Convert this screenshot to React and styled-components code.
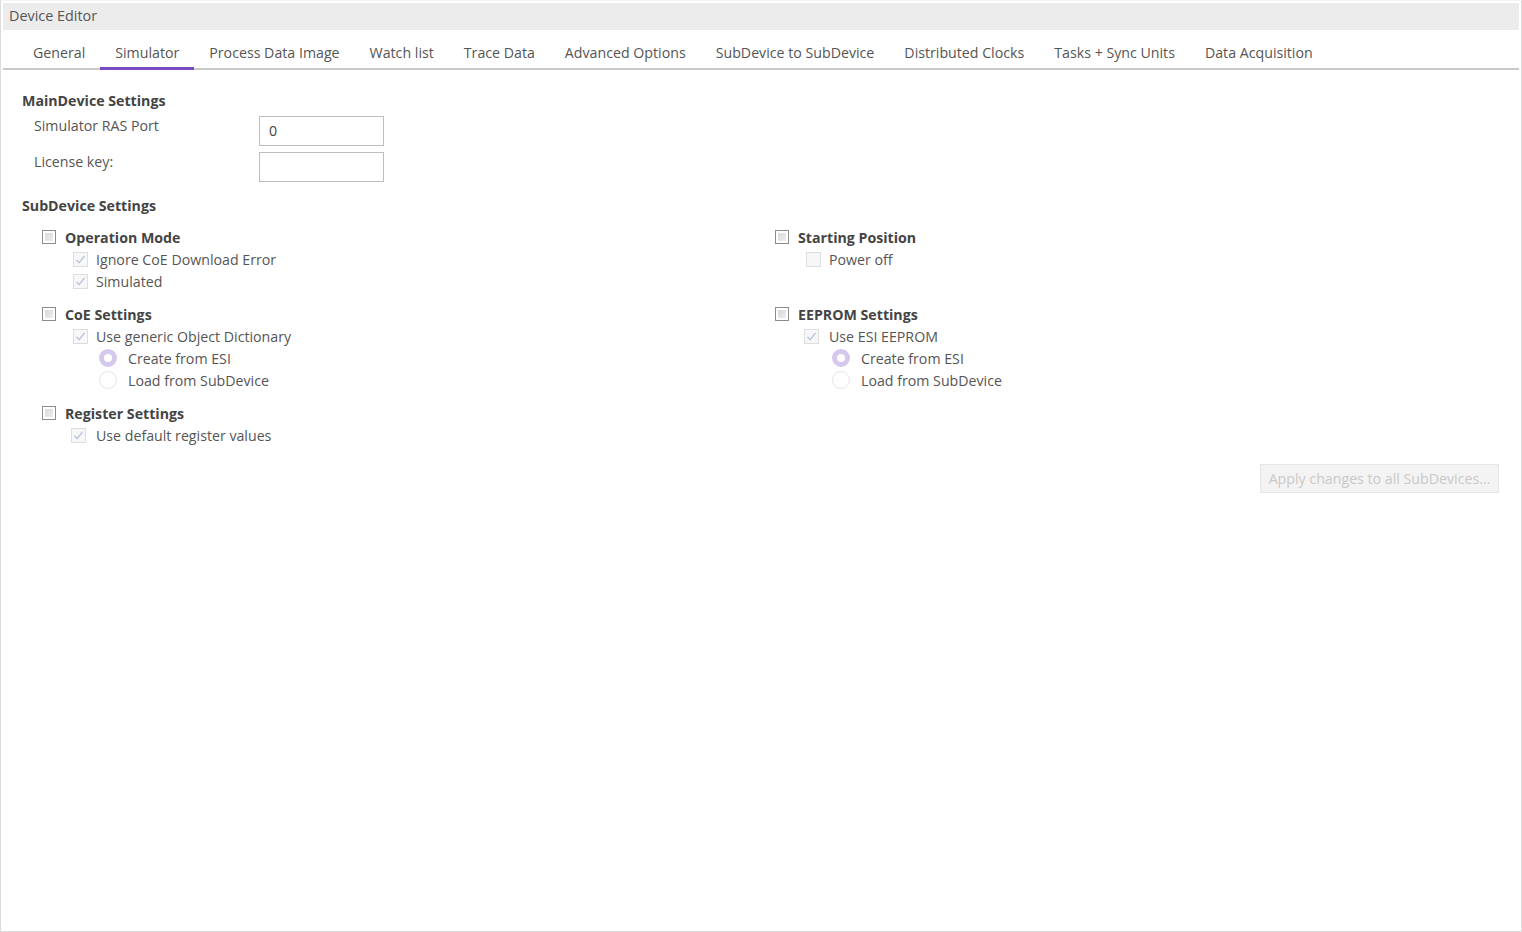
import React from "react";
import styled, { createGlobalStyle } from "styled-components";

const GlobalStyle = createGlobalStyle`
  html, body {
    margin: 0;
    padding: 0;
    background: #ffffff;
  }
  body {
    font-family: "Open Sans", "Noto Sans", "Liberation Sans", sans-serif;
    font-size: 14.2px;
    color: #555555;
  }
`;

const Frame = styled.div`
  width: 1522px;
  height: 932px;
  box-sizing: border-box;
  border: 1px solid #dcdcdc;
  border-top-color: #f4f4f4;
  padding: 2px 2px 0 2px;
  display: flex;
  flex-direction: column;
  overflow: hidden;
`;

const TitleBar = styled.div`
  height: 27px;
  background: #ececec;
  display: flex;
  align-items: center;
  padding-left: 6px;
  padding-bottom: 3px;
  box-sizing: border-box;
  font-size: 14.4px;
  color: #555555;
`;

const TabRow = styled.div`
  margin-top: 7px;
  display: flex;
  padding-left: 15px;
  border-bottom: 2px solid #c9c9c9;
`;

const Tab = styled.div`
  line-height: 31px;
  padding: 0 15px;
  color: #555555;
  white-space: nowrap;
  box-sizing: border-box;
  margin-bottom: ${({ $active }) => ($active ? "-2px" : "0")};
  border-bottom: ${({ $active }) => ($active ? "3px solid #7a4cc2" : "none")};
  height: ${({ $active }) => ($active ? "33px" : "31px")};
`;

const Content = styled.div`
  padding: 20px 20px 0 19px;
  display: flex;
  flex-direction: column;
`;

const SectionTitle = styled.div`
  font-weight: 700;
  color: #444444;
  line-height: 22px;
  margin-top: ${({ $top }) => $top || 0}px;
`;

const FormGrid = styled.div`
  margin-top: 4px;
  display: grid;
  grid-template-columns: 225px 125px;
  row-gap: 6px;
  padding-left: 12px;
`;

const FormLabel = styled.div`
  line-height: 20px;
  color: #555555;
`;

const TextBox = styled.div`
  height: 30px;
  box-sizing: border-box;
  border: 1px solid #bdbdbd;
  padding: 0 9px;
  line-height: 28px;
  color: #444444;
  background: #ffffff;
`;

const Groups = styled.div`
  margin-top: 9px;
  padding-left: 20px;
  display: grid;
  grid-template-columns: 733px 1fr;
  row-gap: 11px;
  align-items: start;
`;

const Group = styled.div`
  display: flex;
  flex-direction: column;
`;

const Line = styled.div`
  display: flex;
  align-items: center;
  height: 22px;
  padding-left: ${({ $indent }) => $indent || 0}px;
  gap: ${({ $gap }) => $gap || 8}px;
  white-space: nowrap;
`;

const HeaderText = styled.span`
  font-weight: 700;
  color: #444444;
`;

const ItemText = styled.span`
  color: #555555;
`;

const BigBox = styled.span`
  width: 14px;
  height: 14px;
  box-sizing: border-box;
  border: 1px solid #8c8c8c;
  background: linear-gradient(135deg, #d4d4d4, #f2f2f2);
  box-shadow: inset 0 0 0 2px #ffffff;
  flex: none;
`;

const SmallBox = styled.span`
  width: 15px;
  height: 15px;
  box-sizing: border-box;
  border: 1px solid #dedede;
  background: #f7f7f7;
  display: flex;
  align-items: center;
  justify-content: center;
  flex: none;
`;

const Radio = styled.span`
  width: 18px;
  height: 18px;
  box-sizing: border-box;
  border-radius: 50%;
  flex: none;
  border: ${({ $on }) => ($on ? "5px solid #d5c8ec" : "1px solid #e6e6e6")};
  background: #ffffff;
`;

const ButtonRow = styled.div`
  margin-top: 18px;
  display: flex;
  justify-content: flex-end;
`;

const ApplyButton = styled.div`
  width: 239px;
  height: 29px;
  box-sizing: border-box;
  border: 1px solid #e6e6e6;
  background: #f3f3f3;
  color: #c9c9c9;
  display: flex;
  align-items: center;
  justify-content: center;
  white-space: nowrap;
`;

const Check = ({ checked }) => (
  <SmallBox>
    {checked && (
      <svg width="11" height="11" viewBox="0 0 11 11">
        <path d="M1.5 6 L4.2 8.6 L9.5 1.8" fill="none" stroke="#b3c0dc" strokeWidth="1.3" />
      </svg>
    )}
  </SmallBox>
);

const Header = ({ children }) => (
  <Line $gap={9}>
    <BigBox />
    <HeaderText>{children}</HeaderText>
  </Line>
);

const Item = ({ children, checked = true, indent = 31, gap = 8 }) => (
  <Line $indent={indent} $gap={gap}>
    <Check checked={checked} />
    <ItemText>{children}</ItemText>
  </Line>
);

const RadioItem = ({ children, on, indent = 57 }) => (
  <Line $indent={indent} $gap={11}>
    <Radio $on={on} />
    <ItemText>{children}</ItemText>
  </Line>
);

const tabs = [
  "General",
  "Simulator",
  "Process Data Image",
  "Watch list",
  "Trace Data",
  "Advanced Options",
  "SubDevice to SubDevice",
  "Distributed Clocks",
  "Tasks + Sync Units",
  "Data Acquisition",
];

const App = () => {
  return (
    <>
      <GlobalStyle />
      <Frame>
        <TitleBar>Device Editor</TitleBar>
        <TabRow>
          {tabs.map((t) => (
            <Tab key={t} $active={t === "Simulator"}>
              {t}
            </Tab>
          ))}
        </TabRow>
        <Content>
          <SectionTitle>MainDevice Settings</SectionTitle>
          <FormGrid>
            <FormLabel>Simulator RAS Port</FormLabel>
            <TextBox>0</TextBox>
            <FormLabel>License key:</FormLabel>
            <TextBox />
          </FormGrid>
          <SectionTitle $top={13}>SubDevice Settings</SectionTitle>
          <Groups>
            <Group>
              <Header>Operation Mode</Header>
              <Item>Ignore CoE Download Error</Item>
              <Item>Simulated</Item>
            </Group>
            <Group>
              <Header>Starting Position</Header>
              <Item checked={false}>Power off</Item>
            </Group>
            <Group>
              <Header>CoE Settings</Header>
              <Item>Use generic Object Dictionary</Item>
              <RadioItem on>Create from ESI</RadioItem>
              <RadioItem>Load from SubDevice</RadioItem>
            </Group>
            <Group>
              <Header>EEPROM Settings</Header>
              <Item indent={29} gap={10}>Use ESI EEPROM</Item>
              <RadioItem on>Create from ESI</RadioItem>
              <RadioItem>Load from SubDevice</RadioItem>
            </Group>
            <Group>
              <Header>Register Settings</Header>
              <Item indent={29} gap={10}>Use default register values</Item>
            </Group>
          </Groups>
          <ButtonRow>
            <ApplyButton>Apply changes to all SubDevices...</ApplyButton>
          </ButtonRow>
        </Content>
      </Frame>
    </>
  );
};

export default App;
